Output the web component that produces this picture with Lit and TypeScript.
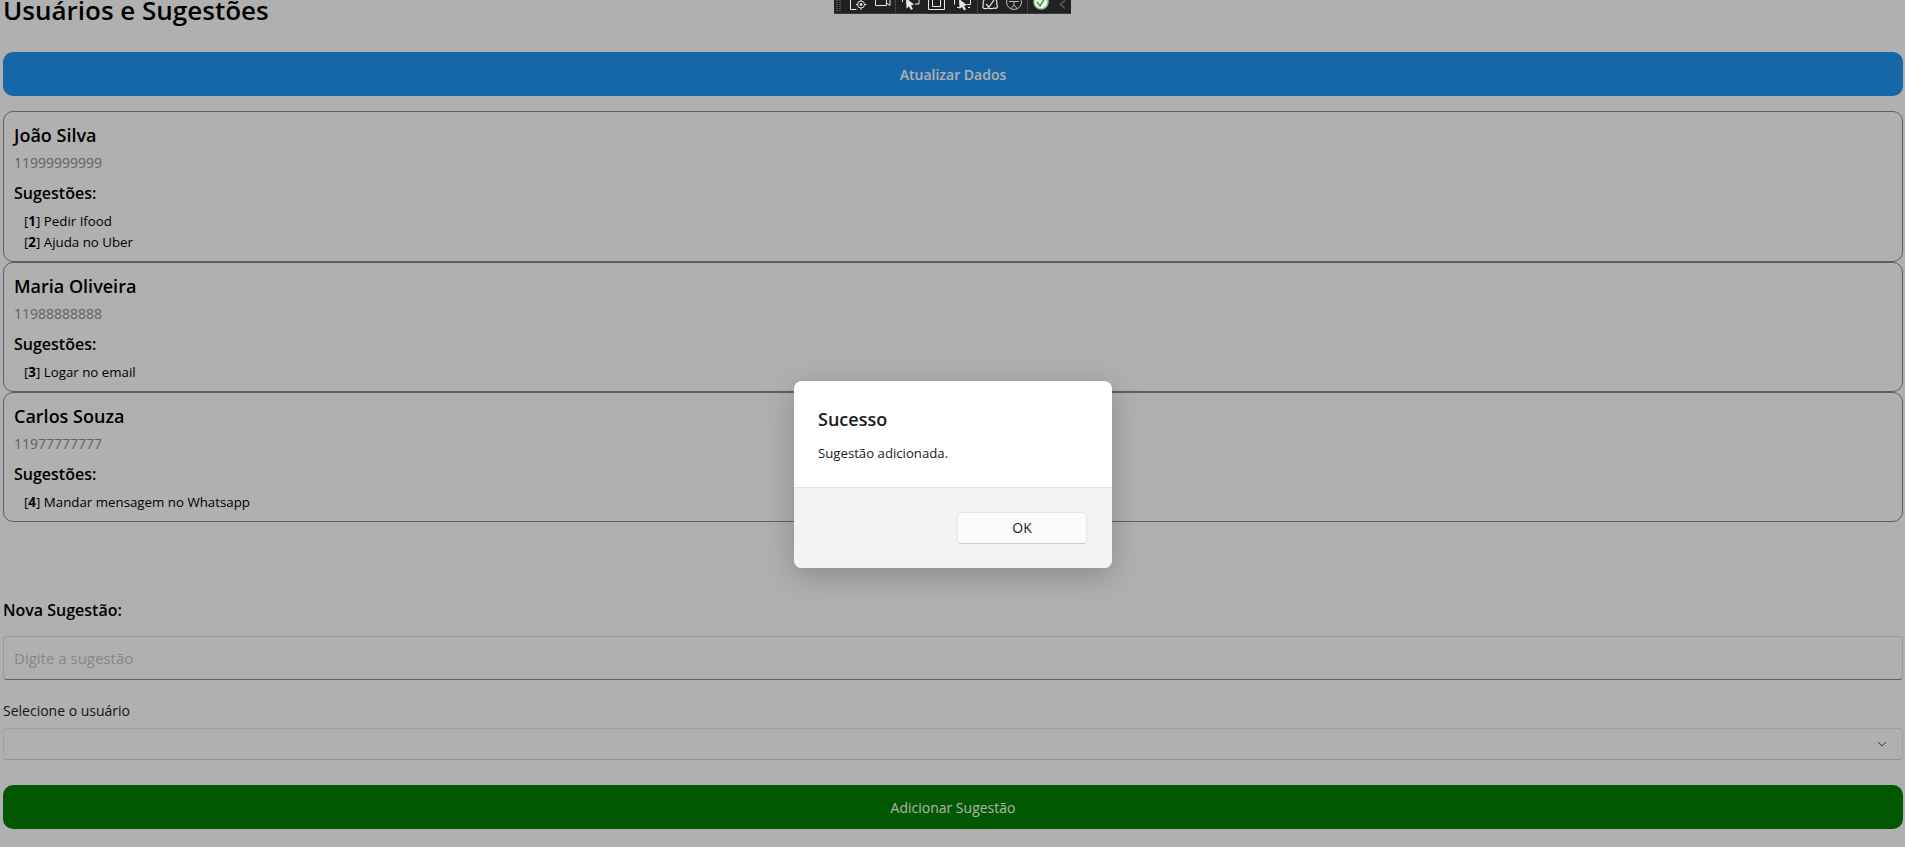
import { LitElement, html, css, svg } from 'lit';
import { customElement } from 'lit/decorators.js';

const users = [
  { name: 'João Silva', phone: '11999999999', items: [{ id: 1, text: 'Pedir Ifood' }, { id: 2, text: 'Ajuda no Uber' }] },
  { name: 'Maria Oliveira', phone: '11988888888', items: [{ id: 3, text: 'Logar no email' }] },
  { name: 'Carlos Souza', phone: '11977777777', items: [{ id: 4, text: 'Mandar mensagem no Whatsapp' }] },
];

// dev toolbar, only the lower part of it is on screen
const toolbarIcons = svg`
  <g fill="none" stroke="#e8e8e8" stroke-width="1">
    <path d="M16.5 0V9.5H22.5" />
    <circle cx="27" cy="4.5" r="3.5" />
    <circle cx="27" cy="4.5" r="1" fill="#e8e8e8" />
    <path d="M27 0V1M27 8V10M22 4.5H23.5M30.5 4.5H32.5" />
    <path d="M41.5 0V5.5H52.5V0M52.5 3L56 5.5V0" />
    <path d="M68.5 0V2M85 0V4H81" />
    <path d="M72 -2L80 4.5L77 5.5L79 9L77 10L75 6.5L72.5 8.5Z" fill="#e8e8e8" stroke="none" />
    <path d="M94.5 0V9.5H110.5V0M98.5 0V6.5H106.5V0" />
    <path d="M120.5 0V4.5M136.5 0V4.5H133M123 7.5H126M134 7.5H136" />
    <path d="M125 -1L133 5L130 6L132 9.5L130 10.5L128 7L125.5 9Z" fill="#e8e8e8" stroke="none" />
    <path d="M150 0C148 3 150 4 149 6C148 9 152 9 154 8C157 9 158 9 160 8C163 9 164 7 163 5C162 3 164 2 162 0" stroke-width="1.2" />
    <path d="M152 4L155 7L160 0" stroke-width="1.2" />
    <circle cx="180" cy="2" r="7.5" stroke="#bdbdbd" />
    <path d="M180 1V5M180 5L176.5 9M180 5L183.5 9M175 1.5H185" stroke="#bdbdbd" />
    <circle cx="207" cy="2" r="7" stroke="#7fc98a" stroke-width="1.6" fill="#f4f4f4" />
    <path d="M203 2L206 6L211 -2" stroke="#2e9e3a" stroke-width="1.5" />
    <path d="M231 0.5L226.5 4.5L231 8.5" stroke="#5c5c5c" stroke-width="1.5" />
  </g>
`;

@customElement('app-root')
export class AppRoot extends LitElement {
  static styles = css`
    :host {
      display: block;
      position: relative;
      height: 847px;
      overflow: hidden;
      background: #fff;
      font-family: 'Open Sans', 'Noto Sans', sans-serif;
      color: #000;
    }
    .page {
      display: flex;
      flex-direction: column;
      padding: 0 2px 0 3px;
      margin-top: -9px;
    }
    h1 {
      margin: 0;
      height: 61px;
      font-size: 26px;
      line-height: 38px;
      font-weight: 600;
    }
    .btn {
      display: flex;
      align-items: center;
      justify-content: center;
      height: 44px;
      border-radius: 10px;
      color: #fff;
      font-size: 14px;
    }
    .btn.blue {
      background: #2196f3;
      font-weight: 600;
      margin-bottom: 15px;
    }
    .btn.green {
      background: #008000;
    }
    .card {
      box-sizing: border-box;
      border: 1px solid #8a8a8a;
      border-radius: 10px;
      padding: 12px 10px 9px;
    }
    .name {
      font-size: 18px;
      line-height: 22px;
      font-weight: 600;
    }
    .phone {
      margin-top: 8px;
      font-size: 14px;
      line-height: 18px;
      color: #8e8e8e;
    }
    .label {
      margin-top: 10px;
      font-size: 16px;
      line-height: 22px;
      font-weight: 600;
    }
    ul {
      list-style: none;
      margin: 7px 0 0;
      padding: 0 0 0 10px;
    }
    li {
      font-size: 13.3px;
      line-height: 21px;
      height: 21px;
    }
    li:last-child {
      height: 20px;
    }
    .form-title {
      margin-top: 77px;
      font-size: 16px;
      line-height: 22px;
      font-weight: 600;
    }
    input {
      box-sizing: border-box;
      display: block;
      width: 100%;
      height: 44px;
      margin-top: 15px;
      padding: 0 10px;
      border: 1px solid #dfdfdf;
      border-bottom-color: #8f8f8f;
      border-radius: 4px;
      background: #fff;
      font: 15px 'Open Sans', 'Noto Sans', sans-serif;
      outline: none;
    }
    input::placeholder {
      color: #c4c4c4;
    }
    .select-label {
      margin-top: 21px;
      font-size: 14px;
      line-height: 20px;
      color: #222;
    }
    .select {
      box-sizing: border-box;
      display: flex;
      align-items: center;
      justify-content: flex-end;
      height: 32px;
      margin-top: 7px;
      margin-bottom: 25px;
      padding-right: 15px;
      border: 1px solid #e6e6e6;
      border-bottom-color: #d6d6d6;
      border-radius: 4px;
    }
    .overlay {
      position: absolute;
      inset: 0;
      background: rgba(0, 0, 0, 0.31);
    }
    .dialog {
      position: absolute;
      left: 794px;
      top: 381px;
      width: 318px;
      height: 187px;
      display: flex;
      flex-direction: column;
      border-radius: 8px;
      overflow: hidden;
      background: #fff;
      box-shadow: 0 8px 32px rgba(0, 0, 0, 0.22);
    }
    .dialog-body {
      box-sizing: border-box;
      height: 107px;
      padding: 25px 24px 0;
      border-bottom: 1px solid #e4e4e4;
    }
    .dialog-title {
      font-size: 18px;
      line-height: 26px;
      font-weight: 600;
      color: #1a1a1a;
    }
    .dialog-text {
      margin-top: 12px;
      font-size: 13.2px;
      line-height: 18px;
      color: #1a1a1a;
    }
    .dialog-footer {
      flex: 1;
      display: flex;
      justify-content: flex-end;
      align-items: flex-start;
      padding: 24px 25px 0 0;
      background: #f3f3f3;
    }
    .ok {
      box-sizing: border-box;
      width: 130px;
      height: 32px;
      padding: 0 0 2px;
      border: 1px solid #e5e5e5;
      border-bottom-color: #cfcfcf;
      border-radius: 4px;
      background: #fbfbfb;
      font: 14px 'Open Sans', 'Noto Sans', sans-serif;
      color: #1a1a1a;
    }
    .toolbar {
      position: absolute;
      left: 834px;
      top: 0;
      width: 237px;
      height: 13px;
      background: #212121;
      border-bottom: 1px solid #3a3a3a;
    }
    .toolbar svg {
      display: block;
    }
  `;

  render() {
    return html`
      <div class="page">
        <h1>Usuários e Sugestões</h1>
        <div class="btn blue">Atualizar Dados</div>
        ${users.map(u => html`
          <div class="card">
            <div class="name">${u.name}</div>
            <div class="phone">${u.phone}</div>
            <div class="label">Sugestões:</div>
            <ul>
              ${u.items.map(s => html`<li>[<b>${s.id}</b>] ${s.text}</li>`)}
            </ul>
          </div>
        `)}
        <div class="form-title">Nova Sugestão:</div>
        <input placeholder="Digite a sugestão" />
        <div class="select-label">Selecione o usuário</div>
        <div class="select">
          <svg width="10" height="6" viewBox="0 0 10 6"><path d="M1 1L5 5L9 1" fill="none" stroke="#555" stroke-width="1" /></svg>
        </div>
        <div class="btn green">Adicionar Sugestão</div>
      </div>
      <div class="overlay"></div>
      <div class="dialog">
        <div class="dialog-body">
          <div class="dialog-title">Sucesso</div>
          <div class="dialog-text">Sugestão adicionada.</div>
        </div>
        <div class="dialog-footer"><button class="ok">OK</button></div>
      </div>
      <div class="toolbar">
        <svg width="237" height="13" viewBox="0 0 237 13">
          <path d="M3 0V11M6 0V11" stroke="#555" stroke-dasharray="1 1" stroke-width="2" />
          ${toolbarIcons}
          <path d="M61.5 0V13M143.5 0V13M193.5 0V13" stroke="#444" />
        </svg>
      </div>
    `;
  }
}
